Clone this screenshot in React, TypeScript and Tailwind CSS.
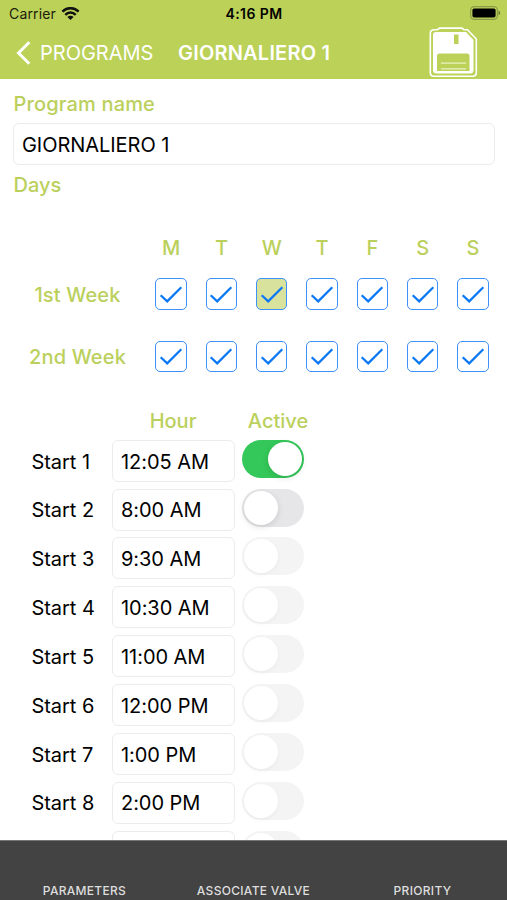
import clsx from "clsx";

const DAYS = ["M", "T", "W", "T", "F", "S", "S"];

const WEEKS = [
  { label: "1st Week", today: 2 },
  { label: "2nd Week", today: -1 },
];

const STARTS = [
  { label: "Start 1", hour: "12:05 AM", state: "on" },
  { label: "Start 2", hour: "8:00 AM", state: "off" },
  { label: "Start 3", hour: "9:30 AM", state: "disabled" },
  { label: "Start 4", hour: "10:30 AM", state: "disabled" },
  { label: "Start 5", hour: "11:00 AM", state: "disabled" },
  { label: "Start 6", hour: "12:00 PM", state: "disabled" },
  { label: "Start 7", hour: "1:00 PM", state: "disabled" },
  { label: "Start 8", hour: "2:00 PM", state: "disabled" },
  { label: "", hour: "", state: "disabled" },
];

function WifiIcon() {
  return (
    <svg className="ml-[5.5px] h-[14px] w-[19px]" viewBox="0 0 18 14" fill="none" stroke="#111" strokeWidth="2.5">
      <path d="M0.9 4.6C5.4 0.1 12.6 0.1 17.1 4.6" />
      <path d="M3.8 7.8C6.7 4.8 11.3 4.8 14.2 7.8" />
      <path d="M9 12.9L5.9 10C7.6 8.3 10.4 8.3 12.1 10Z" fill="#111" stroke="none" />
    </svg>
  );
}

function BatteryIcon() {
  return (
    <svg className="mb-px h-[14px] w-[31px]" viewBox="0 0 31 14">
      <rect x="0.6" y="0.6" width="26.8" height="12.8" rx="3.6" fill="none" stroke="#8d9b47" strokeWidth="1.2" />
      <rect x="2.4" y="2.4" width="23.2" height="9.2" rx="1.8" fill="#000" />
      <path d="M28.6 4.8C30.6 5.4 30.6 8.6 28.6 9.2Z" fill="#66722f" />
    </svg>
  );
}

function SaveIcon() {
  return (
    <svg className="h-[51px] w-[49px]" viewBox="0 0 49 51">
      <path
        d="M5 2.7H8.5L10.5 1.1H33L35 2.7H38.5L47.3 12V45.5Q47.3 49.3 43.5 49.3H5Q1.3 49.3 1.3 45.5V6.5Q1.3 2.7 5 2.7Z"
        fill="none"
        stroke="#fff"
        strokeWidth="1.6"
      />
      <path d="M7 5H37L44.5 13V43Q44.5 46.5 41 46.5H7.5Q4 46.5 4 43V8Q4 5 7 5Z" fill="#fff" />
      <rect x="25" y="7.5" width="4.5" height="9.5" fill="#bbd158" />
      <path d="M10.5 26.5H38Q40.5 26.5 40.5 29V44H8V29Q8 26.5 10.5 26.5Z" fill="#bbd158" />
      <path d="M12 36.2H37M12 41.8H37" stroke="#eaf1c4" strokeWidth="1.2" />
    </svg>
  );
}

function Checkbox({ today }: { today: boolean }) {
  return (
    <div
      className={clsx(
        "flex h-[31.5px] w-[31.5px] items-center justify-center rounded-[5px] border border-[#3d91fb]",
        today ? "bg-[#d8e29c]" : "bg-white",
      )}
    >
      <svg className="h-[22px] w-[24px]" viewBox="0 0 24 22" fill="none" stroke="#0a78f5" strokeWidth="2.2">
        <path d="M1.7 12.2L8.2 18.4L22.3 4.2" />
      </svg>
    </div>
  );
}

function Toggle({ state }: { state: string }) {
  return (
    <div
      className={clsx(
        "flex h-[38px] w-[62px] items-center rounded-full p-[2px]",
        state === "on" && "justify-end bg-[#34c759]",
        state === "off" && "bg-[#e6e6e8]",
        state === "disabled" && "bg-[#f4f4f4]",
      )}
    >
      <div
        className={clsx(
          "h-[34px] w-[34px] rounded-full bg-white",
          state === "disabled" ? "shadow-[0_2px_5px_rgba(0,0,0,0.04)]" : "shadow-[0_2px_6px_rgba(0,0,0,0.12)]",
        )}
      />
    </div>
  );
}

export default function App() {
  return (
    <div className="flex h-[900px] w-[507px] flex-col overflow-hidden bg-white font-['Inter','Liberation_Sans',sans-serif] text-black">
      <header className="h-[79px] shrink-0 bg-[#bbd158]">
        <div className="grid h-[27px] grid-cols-3 items-center pr-[6px] pl-[9px] text-[14px] leading-none">
          <div className="flex items-center tracking-[0.15px] text-[#1c200c]">
            Carrier
            <WifiIcon />
          </div>
          <div className="pt-px pr-[2px] text-center text-[14px] font-semibold tracking-[0.4px] whitespace-nowrap">4:16 PM</div>
          <div className="flex justify-end">
            <BatteryIcon />
          </div>
        </div>
        <div className="flex h-[51px] items-center pl-[16px] text-[20px] text-white">
          <svg className="h-[24px] w-[15px]" viewBox="0 0 15 24" fill="none" stroke="#fff" strokeWidth="3">
            <path d="M13.3 1.3L2.5 12L13.3 22.7" />
          </svg>
          <span className="ml-[9px] w-[138px]">PROGRAMS</span>
          <span className="font-semibold tracking-[0.2px]">GIORNALIERO 1</span>
          <div className="ml-auto pr-[29px]">
            <SaveIcon />
          </div>
        </div>
      </header>

      <main className="min-h-0 flex-1 overflow-hidden">
        <section className="pt-[10px] pr-[12px] pl-[13px]">
          <h2 className="h-[34px] pl-[0.5px] text-[20px] leading-[30px] font-medium tracking-[0.15px] text-[#bbd05c]">Program name</h2>
          <div className="flex h-[42px] items-center rounded-[6px] border border-[#ececec] pt-[2px] pl-[8px] text-[20px] tracking-[-0.05px]">
            GIORNALIERO 1
          </div>
          <h2 className="mt-[5px] pl-[0.5px] text-[20px] leading-[30px] font-medium text-[#bbd05c]">Days</h2>
        </section>

        <section className="mt-[33px] text-[20px] font-medium text-[#bbd05c]">
          <div className="grid grid-cols-[146px_repeat(7,50.3px)] leading-[30px]">
            <span />
            {DAYS.map((day, i) => (
              <span key={i} className="text-center">{day}</span>
            ))}
          </div>
          {WEEKS.map((week) => (
            <div key={week.label} className="grid h-[62.3px] grid-cols-[146px_repeat(7,50.3px)] items-center">
              <span className="pt-px pl-[9px] text-center tracking-[0.15px]">{week.label}</span>
              {DAYS.map((_, i) => (
                <div key={i} className="flex justify-center">
                  <Checkbox today={i === week.today} />
                </div>
              ))}
            </div>
          ))}
        </section>

        <section className="mt-[19px]">
          <div className="grid grid-cols-[112px_122px_88px] text-center text-[20px] leading-[29px] font-medium text-[#bbd05c]">
            <span />
            <span>Hour</span>
            <span>Active</span>
          </div>
          <div className="mt-[4.2px] flex flex-col gap-[6.85px]">
            {STARTS.map((start, i) => (
              <div key={i} className="grid h-[42px] grid-cols-[80px_123px_62px] gap-x-[7px] pl-[25px] text-[20px]">
                <span className="flex items-center pt-[1.5px] pl-[6.5px] tracking-[-0.05px] whitespace-nowrap">{start.label}</span>
                <div className="flex items-center rounded-[6px] border border-[#ececec] pt-[1.5px] pl-[8px] tracking-[-0.05px]">
                  {start.hour}
                </div>
                <Toggle state={start.state} />
              </div>
            ))}
          </div>
        </section>
      </main>

      <footer className="grid h-[60px] shrink-0 grid-cols-3 items-end border-t border-[#777] bg-[#434343] pb-[1px] text-center text-[12px] leading-[16px] font-medium tracking-[0.3px] text-[#dedede]">
        <span>PARAMETERS</span>
        <span>ASSOCIATE VALVE</span>
        <span>PRIORITY</span>
      </footer>
    </div>
  );
}
